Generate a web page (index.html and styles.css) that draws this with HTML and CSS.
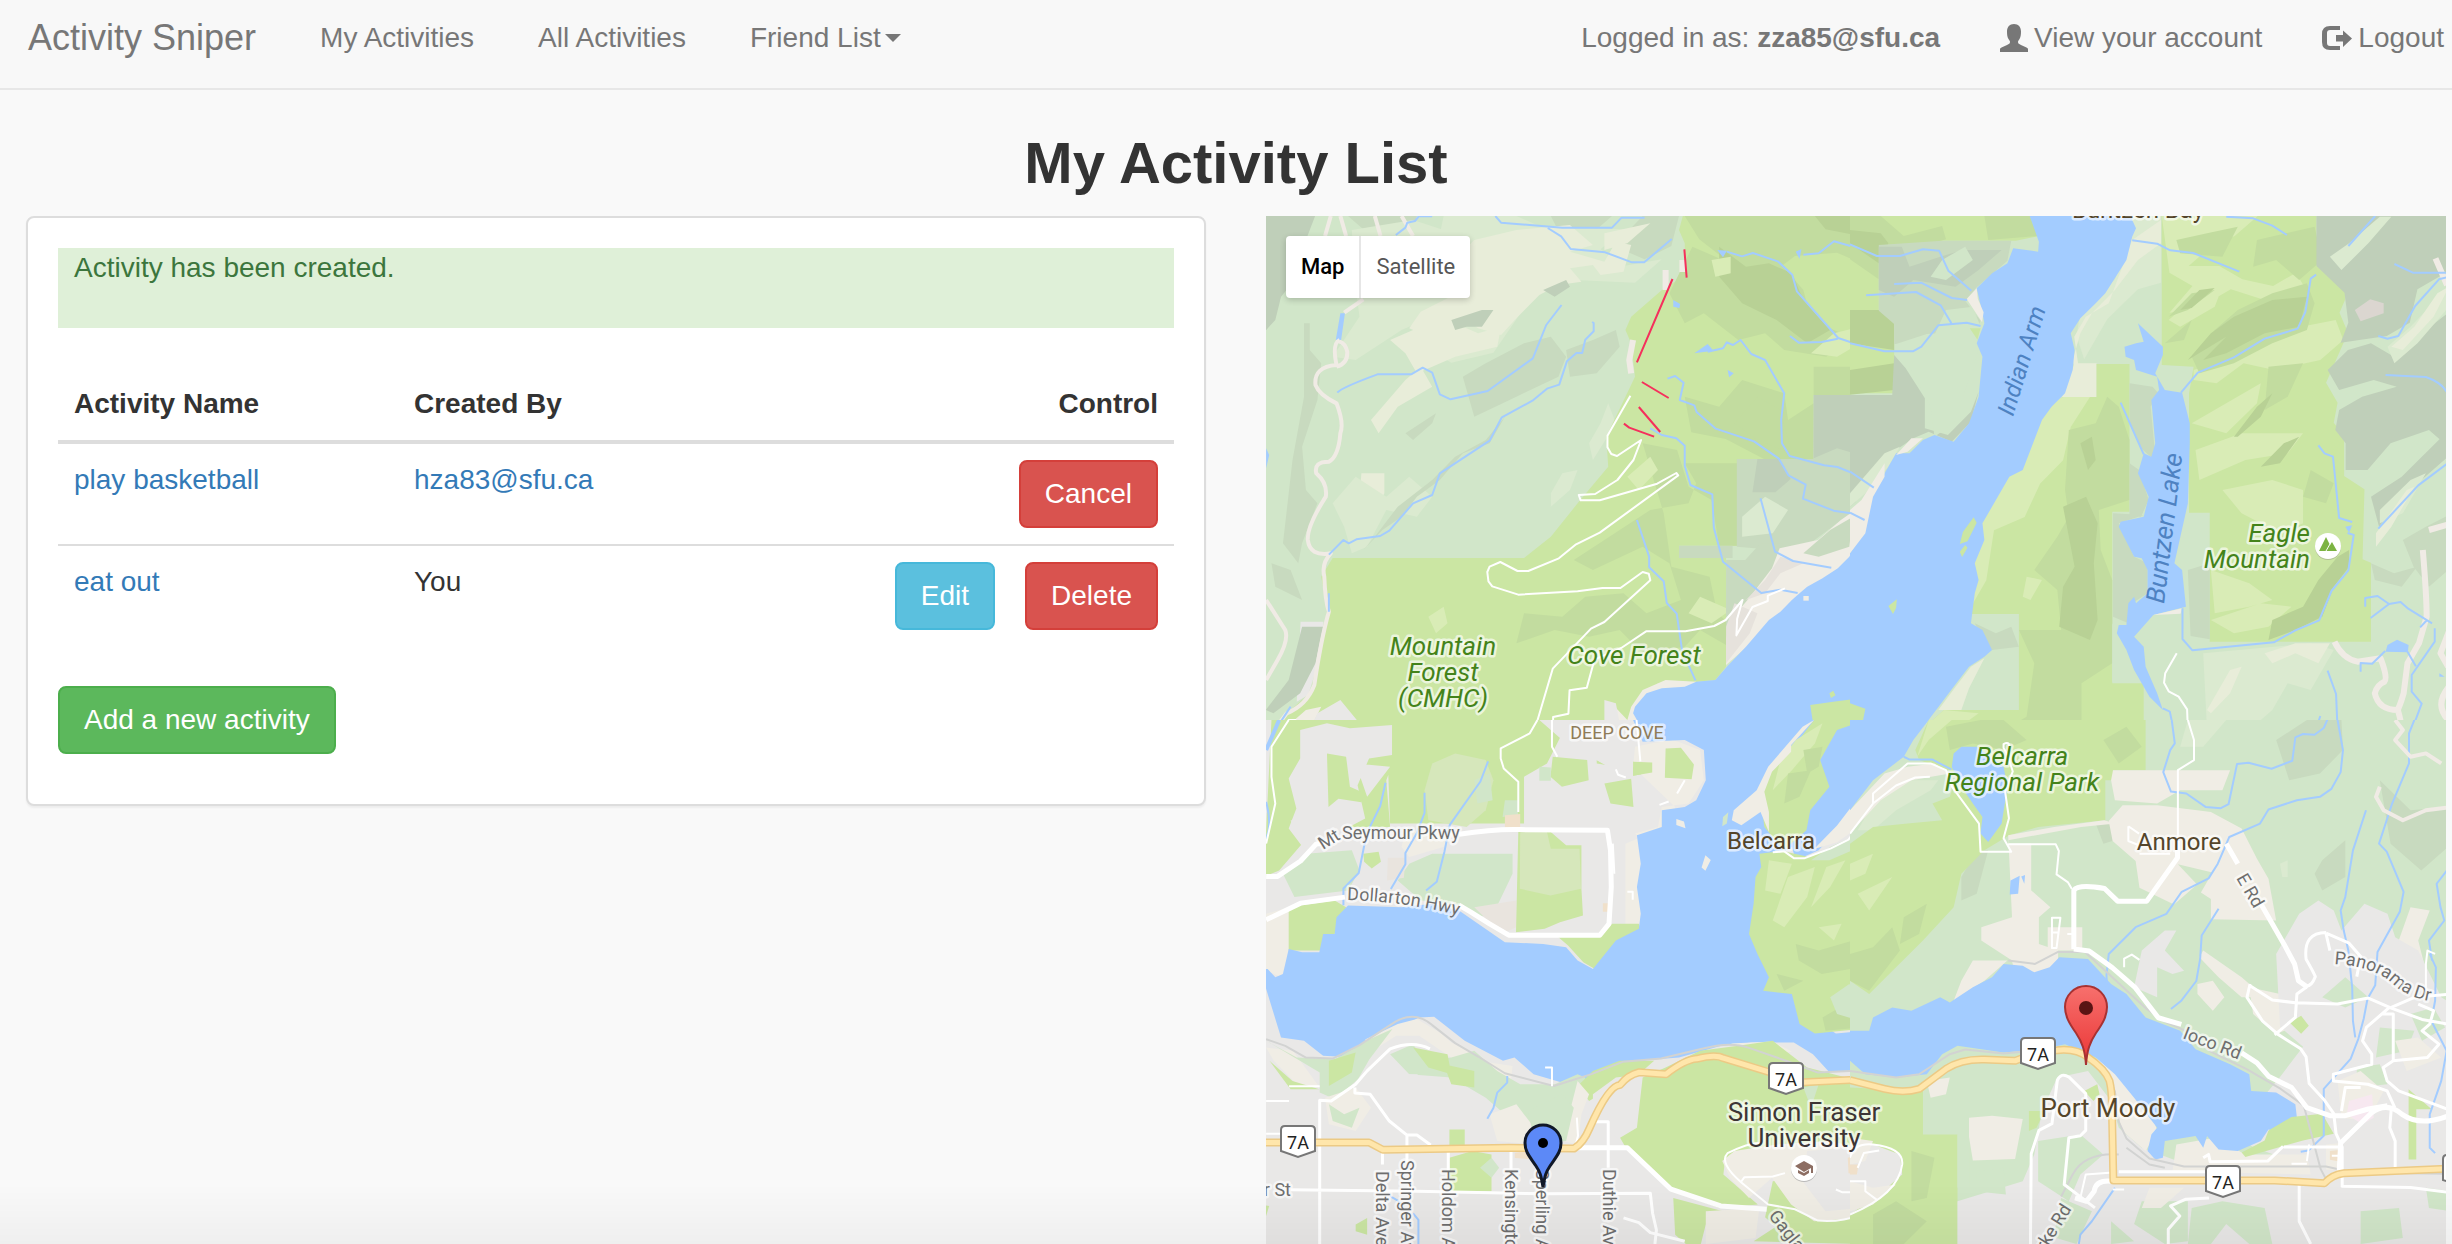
FILE: index.html
```html
<!DOCTYPE html>
<html lang="en">
<head>
<meta charset="utf-8">
<title>Activity Sniper</title>
<meta name="viewport" content="width=device-width, initial-scale=1">
<link rel="stylesheet" href="styles.css">
</head>
<body>
<nav class="navbar">
  <a class="brand" href="#">Activity Sniper</a>
  <a class="nav-link" href="#">My Activities</a>
  <a class="nav-link" href="#">All Activities</a>
  <button class="nav-link nav-toggle" type="button">Friend List<span class="caret"></span></button>
  <div class="nav-right">
    <a class="nav-link" href="#"><span>Logged in as: <b>zza85@sfu.ca</b></span></a>
    <a class="nav-link" href="#"><svg class="icon" viewBox="0 0 28 28" aria-hidden="true"><path d="M14 0c4.500 0 7 3 7 7.500 0 3-.3 5.500-1.500 7.500-1 1.500-1.500 2-1.500 3 0 1.500 1 2 3 3l5.500 2.500c1 .5 1.500 1 1.500 2V28H0v-2.500c0-1 .5-1.500 1.500-2L7 21c2-1 3-1.500 3-3 0-1-.5-1.500-1.500-3C7.300 13 7 10.500 7 7.500 7 3 9.500 0 14 0z"/></svg>View your account</a>
    <a class="nav-link" href="#"><svg class="icon icon-wide" viewBox="0 0 30 28" aria-hidden="true"><path d="M18 2v4H8Q5 6 5 9v10q0 3 3 3h10v4H8q-8 0-8-8V10q0-8 8-8z"/><path d="M14 11h7V6.500L30 14.500 21 23v-5.500h-7z"/></svg>Logout</a>
  </div>
</nav>

<h1>My Activity List</h1>

<main class="columns">
  <section class="panel">
    <p class="alert">Activity has been created.</p>
    <table class="activities">
      <thead>
        <tr><th class="col-name">Activity Name</th><th>Created By</th><th class="control">Control</th></tr>
      </thead>
      <tbody>
        <tr>
          <td><a href="#">play basketball</a></td>
          <td><a href="#">hza83@sfu.ca</a></td>
          <td><div class="actions"><button class="btn danger" type="button">Cancel</button></div></td>
        </tr>
        <tr>
          <td><a href="#">eat out</a></td>
          <td>You</td>
          <td><div class="actions"><button class="btn info" type="button">Edit</button><button class="btn danger" type="button">Delete</button></div></td>
        </tr>
      </tbody>
    </table>
    <button class="btn success" type="button">Add a new activity</button>
  </section>

  <section class="map" aria-label="Map of activities">
    <svg class="map-canvas" viewBox="1266 216 1180 1028">
      <defs>
        <linearGradient id="red-pin" x1="0" y1="0" x2="0" y2="1"><stop offset="0" stop-color="#f7706d"/><stop offset="1" stop-color="#ea3535"/></linearGradient>
        <path id="dollarton" d="M1347 900Q1420 902 1480 922"/>
        <path id="panorama" d="M2334 964Q2373 966 2393 984T2446 1003"/>
        <g id="shield"><path d="M-17 4q0-4 4-4h26q4 0 4 4v21L0 31-17 25z" fill="#fff" stroke="#777" stroke-width="2"/><text class="ref" x="0" y="23">7A</text></g>
      </defs>

      <!-- north-west tile -->
      <svg x="1260" y="210" width="600" height="520" viewBox="0 0 1568 1560" preserveAspectRatio="none">
        <path class="forest" d="M0 0H1568V1560H0z"/>
        <path class="forest-3" d="M0 0H150L120 90 90 210 55 260 40 330 0 380z"/>
        <path class="forest-2" d="M115 340h15v80l30 40-10 110-40 140 10 130 30 40-40 120-10 60-40-60 25-250 30-190zM230 18h180l-20 60-60 10-60-30zM760 18h160l-60 60-60 30zM1000 18h95l-20 90-70 40-80-40z"/>
        <path class="forest-light" d="M240 60l160-30 160 60 30 60-140 170-80 40-120 90-60-10 70-120-10-90zM480 18h190l60 30 220 10-60 60 60 50 100-20-70 70-200-10-80 70-90 150-110 30-90-60z"/>
        <path class="cream" d="M560 90l110-30 140-15 60 60-60 20 90 30 30-60 40 10-20 80-60 10-20-30-60 10 30 40-60 10-50 30-60 70-40 50-60-20-40-30-60 40-40 10-40-20 30-50 70-40 60-80-20-60zM400 360l90-30 80 40 60-20-10 60-110 30-60 30-40 20-30-60-40-40zM380 510l40-40 30 60-90 60-50 80-20-40zM265 790h60v60l-40 90-30-10zM900 70l120-30-60 60-60 20z"/>
        <path class="forest-light" d="M190 880l60-80 80 60 60-60 60 60-40 60-80-20-50 110-40 20-20-80zM760 850l30-60 40-10-20 60-50 50zM860 700l30-60 20-60 20 60-60 110z"/>
        <path class="forest-3" d="M500 330l80-30 30 0-30 50-40 0-30 10zM740 240l60-30 10 20-40 30z"/>
        <path class="forest-2" d="M530 500l60-40 100-60 70-20 40 60-20 60-110 60-110 60zM800 420l70-30 60-30 10 50-60 80-70 10zM300 980l60-90 90-80 60-70 80-50 50-70-40 80-70 30-60 80-60 50-40 60-50 40-50 60zM560 560l60-30-20 50-40 30zM380 670l80-60-10 30-50 50zM30 1060l50 20 30 90-70-40z"/>
        <path class="park" d="M1105 18h463v537h-121v192h-200v260h-152v37h123v326l-28 40-50 5-100 5-60 70-20 70H40l40-60 50-50 30-120 15-130-15-100 30-56h500l70-64 70-100 80-110-5-90 75-180-10-100-15-40 15-40 90-90 50-30V100l-15-40z"/>
        <path class="park-2" d="M1110 18h458v140l-60-30-110 10-70 60-90-30-90-80zM1130 110l120 60 110-10 60 80 20 90 100 50-60 60-110-20-50-50-70 20-90-80-50 30-40-90zM1110 560l90 30 60-80 110 40 10 80 67-50v167h-130l-100-60-90-20zM1000 700l90 20 30 110 60 40 20 137h47v-247H1110l30 60-20 60-100 20-80 60-120 90 50 30 130-70 70 50 30 110-90 40-60-60-100 10-60 60-100-10-20 90 100-40 90 20 80-20 60 70 110-20 40-50 60 40 45 30v-60l-60-60-20-110-100-30-20-160z"/>
        <path class="park-3" d="M1200 110l70 60 60-10 60 30 30 80 70 90-60 40-80-70-90-50-60-80zM1450 18h118v60l-90-20zM1240 200l100 30-70 30z"/>
        <path class="park-2" d="M1447 470h121v85h-121zM1300 560l60 40 30 130-90-40-60-50z"/>
        <path class="park-light" d="M1180 150l50-10 0 50-40 10zM1440 430l60-60 68-20v50l-60 40zM1230 1200l-50 40-60-30 30-50zM440 1220l40-30 10 50-30 30zM960 800l60-60 20 40-50 60z"/>
        <path class="forest-2" d="M1447 555h121v345l-60 40-70 60-90 20-102-10V747h200z"/>
        <path class="forest-3" d="M1447 555h121v180l-60-20-61 30zM1300 747h57l30 60-40 40-60 0z"/>
        <path class="forest-2" d="M1095 1007h140v37h-140zM1218 1050h50l40-50h60l-30 90-60 90-60 70z"/>
        <path class="forest-light" d="M1260 920l60-60 60 40-40 70-80 10z"/>
        <path class="beige" d="M1568 890l-50 40-60 60-100 25-20 60-60 90-45 60-15 60v80l60-60 80-90 70-60 80-60 60-90zM1140 1415l-80-5-60 30-30 50-10 40-45-55v145h90zM60 1560l60-60 40-10-30 70z"/>
        <path class="forest-2" d="M1490 960l60-40-10 90-80 30-40-10z"/>
        <path class="beige-2" d="M1360 1040l-40 70-50 60 50-20 40-60 60-30zM1240 1180l60 30-20 60-62 90v-110z"/>
        <path class="urban" d="M130 1560l20-50 60-40 50 70 60-5 25 25zM900 1470l30 10 10 60-40 20zM106 1235h60l-10 110-30 110-30 20z"/>
        <path class="forest-3" d="M110 1250h55l-20 110-40 90-70 60-20-10 60-90z"/>
        <path class="water" d="M1568 985l-28 55-30 35-40 30-40 25-20 20-20 20-30 35-30 25-60 80-50 60-30 40-50 5-30 15-60 5-40 15-30 40-5 20 25 50h593zM210 310h12l-10 80h-14zM16 715l8 20-8 40zM1195 120l25 2-10 20zM1400 125l15-8-5 30zM1080 270l18 12-2 12-16-4zM1135 430l35-28 15 20zM1222 480l16 10-12 12z"/>
        <path class="park" d="M1568 1465l-70 10-60 10 10 75h120zM1488 1450l10-8 6 14-12 8z"/>
        <path class="beige" d="M1420 1158h14v14h-14z"/>
        <path class="track" d="M185 18l-15 60M210 18l15 60M300 18l15 60M370 18l30 60M270 268l-50 40M208 390q-20 10-8 75-60 5-55 60 10 30 55 55 20 60 10 90-5 70-30 85-40 0-33 35 30 30 25 70-50 90-47 130 5 50 60 40-25 30-17 70 2 70 12 105-20 80-38 220-20 60-72 85l-40 60M200 470q30-10 28-45-5-25-20-30M16 1170l50 90q10 30-20 90l-30 60"/>
        <path class="track thick" d="M975 390l-10 60 5 40M1060 180v60M1104 150v36"/>
        <path class="stream" d="M355 75l25-22 5-15 20-5 10-14h35M615 18l15 20 160 15h130l25-30h60M752 54l35 25 25 38 90 10 70 30h32l72-70M202 548q10-15 105-55h88l30-20 25 15 20 65 28 15 97-25 118-98 35-100 40-60M180 1034l38-44 14 10 20-12 62-10 24-16 62-82 50-25 20-65 130-98 32-70 80-50 38-36 32-12 20-70 25-25h15l8-40 22-25v-25l-4-3M1220 125l40 14 28-10 65 25 38 40 12 50 108 140 57 22M1385 378l23 20 60-2 42-10M1420 134l40-4 40-36 68 22M1170 425l40-10 10-18 16 8 20-15 28 42 36 18 50 100-8 80 2 70 20 38 90 28 35 5 60 28M1065 506l20-8 22 20-10 52 38 16 6 20 50 50 100 38 65 52 25 50 45 28-7 42 80 36 45 8 38 2M1020 655l30 20 38 10 22 22v60l15 58 57 28 4 100 24 102 100 94 50-10 45 10M1308 865l38 160 47 28 100 20M985 930l32 110v32l38 42 8 65 26 32 14 110 35 90M180 1150v55M80 1490l-40 70"/>
        <path class="road thin" d="M968 557l-60 120v35l10 20 15 6 63-48-20 60-42 60-58 42-43 3 5 16h50l150-50 50-32 5 7-205 172-62 35-45 42-80 38h-28l-45-27-28 14-6 16 3 28 10 15 68 25 155-10 65-10h47l58-48 16 5 4 20-120 125-35 20-100 120-45 175-10 30M1372 1135l-45 22v16l-40 18-42 85 2-50 14-56-44 60-30 18-75 16h-103l-65 50-70 35-20 84-45 8-3 70-40 10v40M60 1560l15-30h18l-10 30"/>
        <path class="lift" d="M1109 118l6 85M1078 207l-93 250M998 516l70 48M990 591l56 75M951 641l14 12 65 27"/>
      </svg>

      <!-- north-east tile -->
      <svg x="1850" y="210" width="602" height="520" viewBox="0 0 1568 1560" preserveAspectRatio="none">
        <path class="forest" d="M0 0H1568V1560H0z"/>
        <path class="park" d="M0 18h470l22 60-60 14H240v38H75v170h40v250H0z"/>
        <path class="park-2" d="M0 18h80l60 60 100-30 10 40-60 20-115 20v80l-75-60zM350 18h118l22 60-130 12z"/>
        <path class="park-3" d="M0 60l80 10 20 30-25 60-75-60zM0 300h115v120l-115-20zM0 480l115-20v80l-115 14z"/>
        <path class="forest-2" d="M75 105l165-13h180l-10 60-80 80-30 40 40 60-10 30-130 10-80 30H115v-60l-40-40z"/>
        <path class="forest-3" d="M75 110h60l20 60 80-30 60-20h100l-60 60-60 50-110-20-50 50-40-20zM0 555h110l5-120 30 40 50 90v90l60 20 60-70 20-60-20 90-50 60-60-30-40 20-90 70-40 60-20 60-60 60z"/>
        <path class="forest" d="M240 150l60-40 20 40-70 60-40-10zM250 300l70-10 20 60-10 90-60 200-50 40-10-90-60-130 60-60z"/>
        <path class="forest-light" d="M0 850l90-120 40-20-30 60-60 80-40 40z"/>
        <path class="forest-light" d="M735 18h75v200l-60 20-80 90-60 120-20-70 10-70 90-100 40-130z"/>
        <path class="cream" d="M735 90l75-60v70l-60 50-60 90-60 70-30 60-20 80 20 110h42v-100l-20 100-60 0-20 50 40-60 12-90-10-80 30-60 60-40z"/>
        <path class="cream" d="M585 460h57v101h-90z"/>
        <path class="park" d="M555 561h87v-99h86v443h-45v510h82v145H185l60-60h195v-288H315l10-62 10-40-10-50 25-70-5-50 35-70 35-70 35-20 30-90 20-60 25-40z"/>
        <path class="park-light" d="M555 561h70l-50 90-20 100-60 70-40 100-80 40-20 150-40 80 10-60-10-60 25-80-5-50 35-70 35-70 35-20 30-90 20-60 25-40zM460 1100l40 10-30 60-20-10zM520 1470l60-40-20 90-40 20zM185 1560l60-60 90 10-60 50z"/>
        <path class="park-2" d="M570 660l70-20 30-80 30 30 28 100v180l-80 30 5 120 30 90v250l-80 60v180H250l60-50 90 10 60-40 20-160-40-100h110l-10-120-60-60 60-100 30-60-10-80z"/>
        <path class="park-3" d="M600 700l30-20 10 70-20 30zM555 890l60-30 30 80-10 120 10 170-20 60-80-40 10-120 30-60z"/>
        <path class="forest-2" d="M728 520l60 10 15 20-20 40 10 120-5 35-30-30-30-80zM728 760l25 20 25 90-20 50h-30zM685 910l80 5-65 25 40 100 35 20v90l-40 30-10 60-40-20z"/>
        <path class="forest" d="M683 1240l30 60 50 120h-80z"/>
        <path class="forest-2" d="M325 1240l55 30 40-20 20 60-70 10-20-20z"/>
        <path class="cream" d="M230 1500l45-70 40-60 35-25-40 90-20 65z"/>
        <path class="park" d="M812 18h403v120l80 70-5 60-15 40 22 60-57 150 30 60-10 60 27 40v120l53 40-5 210 22 10v237H937V908h-54V550l12-80-83-5z"/>
        <path class="park-light" d="M812 18h250l-60 60-60 30-60 60 80 0 60 40 80 20 60-40 20 40-80 50-110-40-90 60-70 10 60-80-60-40zM830 330l80-80 60-20-20 60-90 60zM895 480l110-40 80-50 90-40 90-20 20 60-60 60-120 30-80-20-70 60-60-10zM890 640l90-60 90-60-10 60-80 90zM900 720l120-50 160 0-40 60-110 20-120 60zM970 840l130-30 80 30v100l-60 30-100-60zM940 1080l100 40 60 50-60 20-90 20zM940 1230l130-50 80 10-60 60-90 20z"/>
        <path class="park-2" d="M850 90l80-20 80-20-40 90-110-10zM1060 90l150-40 20 100-60 60-60-60-60 20zM830 320l60-70 60-10-70 60zM820 400l70-70-20 60zM890 440l60-80 60-60 90-50 90-30 20 60-20 80-90 40-100 60-90 30zM1090 470l90-10-40 100-60 40zM1200 780l60 40-20 60-60-20z"/>
        <path class="park-3" d="M880 450l60-80 60-50 100-50 90-10-20 90-90 20-100 60-60 20 60-70zM860 300l50-60 40-6-60 60zM1000 680l60-90 40-40-30 70-60 60zM1070 770l60-70 40-20-50 80zM1270 1040l30-20v50l-40 60-30 90-70 40-70 30 10-60 80-40 40-80z"/>
        <path class="forest-2" d="M880 1080l57-20v228l-50-10z"/>
        <path class="forest-3" d="M1215 18h353v160l-90 60-20 100-60 40-120 20 20-60-10-90-73-80zM1297 420l60-20 60 40 60-60 91-80v420l-60-60-100 40-60 80h-57v-80l-27-40 10-60 60-40 90-30-60-20-90 30-30-60zM1357 860l80-60 131-150v80l-130 130-60 90z"/>
        <path class="forest-2" d="M1357 1060l60 30 60-20-40 60-70-20zM1440 990l60-40 68-40v160l-60 60-40-60z"/>
        <path class="forest-light" d="M1300 100l60-60 20-20h30l-60 80-70 80-30-40zM1400 410l60-60 108-130v60l-90 120-60 60zM1380 900l80-90 40-20-60 120-60 30zM920 1330l280-30 60 20-60 120-60-20-40 80-60 60h-110z"/>
        <path class="cream" d="M1410 410l60-60 60-100 30-20-40 90-80 100zM1370 970l80-130 20-10-60 120-40 60zM930 1500l60-120 30-10-30 80-50 60zM1080 1330l80-30 90 0-30 60-60-30-60 30z"/>
        <path class="taupe" d="M1315 300l40-32 35 12v30l-60 24z"/>
        <path class="water" d="M468 18l24 77-2 30-65-10-15 45-40 30-40 45 15 75 5 30-20 60 15 40-10 120-25 80-40 55-50-20-30 15-35 40h-35l-35 70-25 40-20 80-5 50-35 60v530h185l85-130 40-60 40-30 20-20-25-60-30-20 10-90 10-40-10-50 25-70-5-50 35-70 35-70 35-20 30-90 20-60 25-40 35-40 20-70 5-60-10-50 25-45 40-45 25-30 55-100 15-70 10-25-10-25V18z"/>
        <path class="water" d="M750 340l65 70v25l-20 55 25 50 45 8 20 92v60l-5 180-35 180 20 20 10 110-85 25-50 65 25 30 5 60 30 80 15 50-35-40-40-80-20-60-25-50 5-25h20l5-65 15-20 5 20 30-30v-70l-15-35-20-5-40-90 5-15 60-15 13-60-28-70 15-60 20 10 10-40-10-130 20-30-5-40-55-20-5-30-22-10-3-30 30-10 20-5zM1395 1325l5-20 25-16 30 16-2 22zM1290 950l18-4-8 22zM1535 1390l14 10h-14z"/>
        <path class="beige" d="M330 235l-26 32 40 70 4-30-15-40zM190 685l-40 40-30 10 40-50zM90 760l-60 110-30 30v130l40-60 20-110 30-60zM790 1215l75-20-4 16z"/>
        <path class="park" d="M322 922l8 16-24 56-20 8 8-36zM300 1005l6 8-14 28-6-16zM100 1188l22-20-2 26-8 18zM312 355h28l-8 34zM0 1480l40 16-6 34-34 14z"/>
        <path class="track thick" d="M1262 1295q20 50 60 60l60-10q20 60 10 70-20 10-25 35 10 50 60 50 10 40 10 60M1492 1020q10 140 10 200l-20 80-30 60-10 90q-10 40-20 60M1568 1240l-30 90 20 40M1568 1420q-50 60-10 110M1525 145l30 80M1568 940l-60 20"/>
        <path class="stream" d="M0 103l70 35h60l60-20 42 4 24 60 60 60M115 222l70-4 80 46 40 6M42 256l130-10 64 40 28 54M0 400l90 24h74l22-14 44-64 74-8 36 10M0 785l62 48M0 908l38 22M735 91l65 10 34 20 60 8 120 56M980 20l70 5 50 22 38 28M862 548l44-60 94-46 80-56 86-30 20-50 14-100 14-12M705 578l60 155M866 1195v92l26 34 212-24 56-36 62-30 32-88 44-62 14-106-16-6M1220 706l16 24 22 10 16 184 34 12M1298 108l70-90M1376 378l24 8 28-8 44-90 62-80 34-10M1418 162l48 26h86M1395 495l105 6q50 20 60 60M1376 956l104-130 88-76M1342 1190v-26l32-6 30 24 30-6 20 20 62 44M1404 1182l-48 42M1503 1230l-18 22M1523 1255v40l-60 100v50l26 36-26 80M1330 1385v-26l30 2 34-38M1452 1325l22 44M1244 1382l22 70 4 108M1225 1518l-12 42M815 1495l18 10 10 55"/>
        <path class="road thin" d="M851 1330l-30 60-3 28 12 26 26 16 22 38 2 62"/>
      </svg>

      <!-- south-west tile -->
      <svg x="1260" y="720" width="600" height="524" viewBox="0 0 1568 1568" preserveAspectRatio="none">
        <path class="urban" d="M0 0H1568V1568H0z"/>
        <path class="park" d="M30 0h320v120l-20 60 10 140H230l-150-20 30 70-60 80-40 20zM330 0h400l60 60 120 80 90 110-20 40-120-30-80 30-60 20H340z"/>
        <path class="urban" d="M105 30l70-20 60 15 110-10v90l-60 10-30 80 20 100-100 60-60 30-40-60 20-60-20-90 30-60zM690 170l60-40 40-90h90v90l110 20 60 60v80l-60 40H690zM250 130l90 10-60 90zM880 0h100v70l60 60-60 50-100-60z"/>
        <path class="park" d="M175 100l50 10 10 90 40 20-10 26-60-10-26 24zM765 110l90 10 4 60-70 20-30-30zM975 125l50 2v30l-50 10zM1060 85l40-2 34 50-6 44-70-4zM900 190l70-14 6 84-60-10z"/>
        <path class="park-soft" d="M450 130l60-30 80 20 20 60-20 90-50 50-100-20-10-90z"/>
        <path class="forest" d="M60 460l60-60 120-10 20 60-30 60-140 20zM390 430l60-30h210v60l-50 120-40 10-60-40-90-10-60-60zM560 180l40-20 8 80-40 10zM640 240h36l-2 44-40 6zM730 140l30 2v40h-30z"/>
        <path class="beige" d="M16 580l60-20v130l-20 80-40-20zM380 330l130 10-30 40-90 30-20-30zM980 340l60-20 10-60 70-10 40-70-10-90-70-30-60 10-40 10-5 60 110 120-6 50-124 60v270h85l-12-100 10-70-14-90z"/>
        <path class="park" d="M1060 85l40-2 34 50-6 44-70-4zM975 125l50 2v30l-50 10z"/>
        <path class="taupe-2" d="M560 560l110-20v80l-40 20zM334 412h46l-4 60-44 8z"/>
        <path class="park" d="M675 335h85l40 40h40v130l4 80-60 20-40 20-75 10zM75 560l120-20 30 20-30 80-30 50H75zM780 650l110-10 30-30h70l5 20-60 30-60 85-30-20-40-50z"/>
        <path class="park-soft" d="M680 335h70l10 50h75l4 120-80 20-80-20z"/>
        <path class="orange" d="M640 285l40-4v40h-40zM896 548h14v26h-14z"/>
        <path class="park" d="M270 400l40-6 6 30-24 20-20-20z"/>
        <path class="water" d="M0 745h20l20 25 20-10 15-75 35 10h45l10-55h30l5-50 30-35 140 5 80-10 70 20 50 40 70 55 100 5 60 10 30 40 40 25 60-85 60-35 5-45-10-80 10-70-10-85 65-25v-50l60-10 30-20 25-60-5-90-50-30-110 5-25-65h593v240l-60 90-48 60-60 30-10-40-30 20 5 40-15 30-5 80-12 90 22 60 30 70-15 40 75 10 20 90 40 28 118-13v125h-138l-40-50-50-35h-110l-80 10-110 35-110 10-70 40-95 35-105-35-50-50-30 10-100-60-80-72-40 2-70 50-100 70-80-5-50-45-60-10z"/>
        <path class="park" d="M1448 0h120v6l-60 24-44 90 24 80-50 70-10 60-60 60-50-70-10-90 20-80 60-60z"/>
        <path class="park-light" d="M1400 60l70-50-20 60-60 80-50 60 20-90z"/>
        <path class="park-2" d="M1420 90l50-10-10 60-30 20zM1380 160l60-10-30 80-40 20z"/>
        <path class="beige" d="M1448 0l-30 20-90 120-30 70-60 60-5 30 25 15 50-40 22 60 0-60-12-60 20-60 50-60 0-20zM1568 226l-60 90-60 70 60-20 62-50zM1088 296l20 8 4 20-24-10zM1164 405l14 14-14 32-10-10z"/>
        <path class="forest" d="M1210 290l14-14-4 34-12 8z"/>
        <path class="park" d="M1305 400l60-8 70 18 133-60v575l-118 13-40-28-20-90-75-10 15-40-30-70-22-60 12-90 5-80 15-30z"/>
        <path class="park-light" d="M1330 420l60 10-30 90-40-10zM1380 470l70-30-20 90-60 90-30-20zM1480 440l50-20-40 80-50 60zM1460 620l60-10-20 50z"/>
        <path class="park-2" d="M1400 670l60 20 90-30 18 80-100 20-60-40zM1350 760l70 20-50 30zM1470 890l60-40 38 40v30l-90 10z"/>
        <path class="forest" d="M1490 830l50-40 28 40v70l-60-20zM1440 420l50-40 78-40v40l-80 40z"/>
        <path class="beige" d="M1230 968l110-6 50 30-40 10zM360 910l50-15 60 40 30 30 100 60 60 10-4 40-60-10-90-50-90-70-60 0-110 80 30-70zM16 980l70 10 70 110-60-10-60-70z"/>
        <path class="forest" d="M16 960l80 50 100 5 90-60 60-30-60 90-30 60-60 60-40-20v-60zM340 1000l60-30 30 50 70-10 60-20 60 60 60 40 90 0 60-30 20 10v60l-30 100-80 30-80-60-70-70-90-60-110-10z"/>
        <path class="park" d="M180 1020l70-25-10 60-60 40zM400 980l90 20 10 60-60-20zM480 1030l80 20v50l-60-10zM25 1020l60 60 70 25H80zM830 1095l40-45 70-30 90 0-40 40-70 40-60 40z"/>
        <path class="urban" d="M280 1120l70-60 60 0 100 60 70 60v110H280zM870 1120l60-50 70-10v180l-60 20-70-80z"/>
        <path class="beige" d="M600 1180l70-30 40 60 0 60-90-10zM830 1080l30 40-20 60-10 90-40-10zM170 1130l80-30 40 60-40 70-70-20z"/>
        <path class="forest" d="M700 1170l90-50 30 40-20 100-80 10zM180 1150l40 30 40-20-20 60-50-20z"/>
        <path class="park" d="M1000 1070l60-30 90-50 100-15 90-15 90 80 138 40v210l-318 0-35 30-4 40 90 90-100 10-120-50-120-120-20-40 44-30z"/>
        <path class="park" d="M1080 1430l130 40-45 40-20 90-60-60zM495 1225h40v50h-40zM495 1310l60-20 50 10v110h-110zM1340 1380l60-10 30 60 30 100-60 38-80-80zM1290 1560l80-60 198-10v78zM250 1510l30-20v50l-30-10zM0 1450l24 4-16 60-8 20z"/>
        <path class="forest" d="M575 1340l30-30 20 30-20 30zM1220 1330l60-34 90 50-80 40-50-20zM1420 1100l40-10-20 70z"/>
        <path class="beige" d="M1165 1470l140-10-10 90-130 18zM1240 1290l110-20 140-10 78 20v210l-120 10-60-50-50-80-60 60-50-60-20-50z"/>
        <path class="urban" d="M1430 1290l110-10 28 60v120l-90 10-60-90z"/>
        <path class="orange" d="M666 1295l60-10v30l-60-4zM1536 1310l32-10v60l-30-4z"/>
        <path class="rail" d="M16 955l50 20 54 35 70 3 70-40 80-60q60-50 110 0l60 54 60 40 70 50 128 38 100-36 80-36 100-10 110-30q70-22 120-2l100 40 80 34 110-6"/>
        <path class="stream" d="M328 188l-14 70-26 60-16 60-14 80-40 46v50M430 218v60l-20 60-30 60v34l-38 74M596 124l-20 60-80 130-14 80-20 90-28 26M16 245q16 70 0 110M646 1065v20l-26 30-10 46-16 32M340 1425l30 20M400 1476l14 20v72"/>
        <path class="water-line" d="M50 0l-34 90"/>
        <path class="road thin" d="M75 0l-45 80v90l10 80-24 120M725 0l-20 40-76 45v30l8 30 38 40v90M763 0v80l14 30M984 0l10 124M930 148l6 16 20 8M1110 180l-20 40M1068 244l-24 10M922 370l4 90M960 514h14v24M1340 396l30-3 26 21h26l70-30 46-26 32-50M1568 1480q-50 24-110 18l-60-34-70-14-70-66q-60-60-36-88 60-34 90-30M1256 1384l10-16 74-2 32-10M1505 1405l16 8h47M16 1140h60M16 1238h40M76 1096h80M828 1190l3 54-6 26M745 1040h18v56"/>
        <path class="road" d="M156 1568v-430l30 2 64-50 30-40 60-66q60-26 104 0M248 1100v16l40 4 50 80 46 42h26l36 30M320 1290v40M384 1245v80M492 1290v60M656 1285v60M740 1380v30M80 1406l330 4 340 8 270-2 6 60 10 50-4 42M910 1340v-138h-34M950 1490l40 14 30 30 90 26"/>
        <path class="road major" d="M16 468h30l60-46 40-50 60-14M520 342q90-16 160-14l228 2 8 60 2 110-6 110-24 34H650l-50-34-50-36-30-20M16 598l90-50 116-18M820 1280h140l114 124 130 50 120 10"/>
        <path class="yellow-edge" d="M0 1264h285l36 22 330-6 170 2q24-16 40-60 50-130 80-130 20-30 50-38l70 6q50-44 80-46 50-14 70-2l120 42 90 30 148-8"/>
        <path class="yellow" d="M0 1264h285l36 22 330-6 170 2q24-16 40-60 50-130 80-130 20-30 50-38l70 6q50-44 80-46 50-14 70-2l120 42 90 30 148-8"/>
      </svg>

      <!-- south-east tile -->
      <svg x="1850" y="720" width="602" height="524" viewBox="0 0 1568 1568" preserveAspectRatio="none">
        <path class="forest" d="M0 0H1568V1568H0z"/>
        <path class="forest-2" d="M1110 60l80-60 90 0 4 90-60 70-80 20zM1380 180l80 90 108-10v110l-80 80-80-80zM1230 420l60-60v110l-60 40-20-50zM640 310l50-10v60l-30 10zM290 470l40-80 30 0-30 130-40 20z"/>
        <path class="forest-light" d="M880 0h100l-60 80-60 0zM20 330l60-120 60-30 90 0-20 30-90 60-60 60zM1120 430l20-10v50l-14 0z"/>
        <path class="park" d="M205 0h565v150h-85v30h-20v120l-175 20-75 25-65 45-60 70-20 100-80 100-140 160-50-40V370l60-50 90-10 90-10-25-50 45-20 20-70-100-40-10-30z"/>
        <path class="park-2" d="M250 20l90-20h60l60 60-60 30-80-20-60 20zM660 60l60-40 40 60-60 50zM0 700l60-20 50-60 20 70-80 120-50-30zM140 590l60-40-20 90-50 30z"/>
        <path class="park-light" d="M205 0h60l-60 60-30 50zM0 430l60-30-20 60-40 20zM20 520l90-50-60 100z"/>
        <path class="beige" d="M0 270l90-110 60-20 70-10 40 30-100 20-80 60-80 100zM685 150h305l-20 60-110 0-60 40-110-10-10-60zM710 255l90 0 140 20 80 50 40 90 30 60 20 125-170-4 0-60-26-20 30-60-90-24 50 60-60 60-90-50-10-80-60-60-10-60zM412 345l120-25 130-20 30 10-90 10-190 40v10h60l0 140 50 50-30 30 0 80 50 20v90l-110 0-10-60-80-60v-40l80-30zM515 620l90 0v70h-90zM320 720l90 0-60 60-80 60 20-60zM920 690l100 80 60 60-60 0-60-60-50-60z"/>
        <path class="beige" d="M1460 560l50 10-30 90 20 90-20 30-60-90zM1040 800l120 30-10 90-40 20-60-60zM905 790l40-10 30 50-30 40-40-50z"/>
        <path class="urban" d="M760 690l60-60 30 0-30 60 50 60-30 10-40-20v90l-60-30zM1110 700l60-120 50-40 40 30 20 60 60-80 60 30 20 70 60 40 60 140 88 60v738H1290l-60-160-60-140-120-50-160-120 90 60 60-40 80-110 60-90-60-60z"/>
        <path class="forest" d="M1290 770l60 60-60 30-60-30zM1460 880l60-20 30 60-60 40zM1380 920l90 10-20 60-80 20zM1320 1040l60-10 20 60-80 10z"/>
        <path class="beige" d="M1270 1080l60-30 60 60-40 90-70-10zM1420 960l60-10 60 60-90 40z"/>
        <path class="pink" d="M1300 1140l60-20 4 70-30 20-40-30z"/>
        <path class="park" d="M1145 905l30-20 20 30-20 24zM1455 1105l60 60h-40v150h-20z"/>
        <path class="park" d="M0 1100l190 10v130h90v328H0z"/>
        <path class="park-2" d="M160 1290l60 20-20 120-40 10zM60 1480l60-40 80 60-60 68H60z"/>
        <path class="urban" d="M0 1270l60 0 70 30 6 60-60 60-76 60z"/>
        <path class="beige" d="M0 1380l60 20 60-10-60 60-60 20zM0 1250l60 10-20 60-40 10z"/>
        <path class="urban" d="M500 1170l40-100 80-20 60 90 20 80 60 60 140 60 340 0 328 10v260H280v-170l170-60 30-80z"/>
        <path class="forest" d="M280 1240h30v160h-30zM490 1260l110-20 60 60-60 60-30 80-80-60zM330 1350l70-10 6 80-80-10zM760 1440l120 0 0 120-60 8-80-60zM890 1460l80-20 110 20 20 108h-60l-60-60-40 60-60 0zM1330 1470l100-10 10 90-110 18zM1500 1400l68 10v60l-60-10zM550 1430l80 40-40 98-60-20zM680 1500l60 60-60 8z"/>
        <path class="beige" d="M310 1190l60-6 80 10-20 120-110 4-10-70zM640 1000l60 60 90 130 10 40-30 60-60-60-30-110zM200 1080l60-10-10 50-40 10zM850 1270l100-20 80 50 160 0 10 60-360-10zM1240 1270l40-4v80h-40zM780 1400l90 0-60 60-50 0z"/>
        <path class="orange" d="M1250 1290l28-4v36l-28-6zM0 1330l22 0-4 30H0z"/>
        <path class="park" d="M466 1170l40 0-20 50-20 10zM610 1110l34-20 6 30-16 20z"/>
        <path class="water" d="M0 0h205l-40 60-25 50-80 70-60 90zM290 80h40l70 60 10 60-15 110-35 55-20-25 5-50-25-40-30-50-25-60 5-40zM418 480l24-14-4 54-22 2zM446 468l10-4-2 26zM0 930h50l10-40 50-30 50 10 75-40 25 15 60-45 50-30 30-40 50 5 30 20 40-15 25-30 75 5 60 75 40 30 50 70 90 40 40 55 90 45 50 30 5 50 65 5 50 35 5 50-20 40-55-15-20 35-60 30-50-5-30-40-10 35-20-35-80 15-5 50-20 5-20-25 10-50 15-20-60-90-50-70-50-50-80-40-60 15-100 10-120-20-40 25-40 60-80 10-80-10-40-40z"/>
        <path class="park" d="M1020 1294l60-36 10-30 60-40 80-10 30 60-80 20-60 20-90 30z"/>
        <path class="stream" d="M140 110l14 8h60l50 30M838 0l8 70-12 20-18 66 20 58 40 6 50 40 40 4 20-12 22-120 30-4 60 18 54-24 8-70 20-10 30 2 24-20 12-32M1270 0l14 90-6 66-24 50-30 24-60 10-74 28-22 42-80 40-30 80-24 44-70 40-40 66-80 40-70 80-6 64 2 50M1470 0l-14 40v90l-44 120-34 120 20 24 44 120-10 60-58 120-6 100-20 40-10 60-14 60-20 60-70 90v140l-40 44-20 4M1344 270l-34 120-20 140-12 40 8 60 12 60 10 110 2 100 6 50M960 565l-44 80-4 70-10 66-40 60-26 24M1568 430l-40 60 10 70 10 40-40 60 8 60M1510 700l16 40-2 100-10 60 40 90-14 90-30 100v100l14 16M690 1400l-60 100-30 40-4 28"/>
        <path class="rail" d="M412 720l70 10 60-36h70l160 170 50 40 60 30 60 60 90 50 90 60 60 50 14 60 30 130 14 30M0 1050l120 20 60-10 80-60 40-14 100 12 100-10 60-10 60 24 50 50 20 60 10 90 20 50 60 60 90 24h370l70 18 258 4M700 1300q-90-6-120 60l-30 66M720 1280l60 50 40 10"/>
        <path class="track" d="M1420 0l20 30-20 30 40 50 40-10 40 30M1380 200l-10 30 20 40 50 30 60-30 68-10"/>
        <path class="road thin" d="M0 340l60-90v-30l90-90 60 0 40 20 16 50 70 110 4 84h80l-20-40 14-60-10-80 20-60-14-50-10-20v-12q10-6 14 0v20M60 250l60-54 50-24 38-2M412 372h124l8 20-6 70 30 24 10 20M880 0l16 60v60l-42 30v200M725 318v44l26 12M725 318l28 22M754 400h80M526 592h22l-10 90h-12zM526 636h18M566 640h18v40M714 740v-26l20-12 20 16M1500 820v-90l4-40 20 10M0 1310q10-46 60-40 80 10 76 60-10 90-136 150M20 1340l16-44 40-8M0 1380l40 0v30l30 26M600 1430l14-70 70-6M684 1405h30M1190 1320l6-50M1150 1328h40M1255 1304h22"/>
        <path class="road" d="M1240 636q-60 0-52 80 20 40 24 52-10 30-24 28M1240 640l10 50M1240 638l60 30 30 40-10 60M1042 790l-8 40 40 70 40 40 60 44 14 24 8 80 40 50 24 40 6 60 16 40v120M1040 794l60 44 60 8 110 4 80-18 60 30 80 34 78 16M1200 790l-36 30-4 70-54 52M1405 860l-60 60-10 40 24 40 0 30-100 30v20l90 10 50 20 20 50M1385 880h30v140l-26 20 10 40 30 30 140 60M1410 860l60-30 98-10M1480 850l40 20-10 40-20 20 44 40-30 40-90 10M1280 1170l10-70 40 0M1130 1278h150M700 1352h230M1170 1380v120l30 68M1280 1395l180 4 108 16M935 1430l-60 4-40 20 24 30-30 40v44M1420 1340v-80l-14-40 4-60M920 1310l14-10 4 22 150-2 40-44M470 1568l2-270 20-70 34-20 14-130q10-24 30-10l44 50v110l-14 16-30 6-12 140 80 70"/>
        <path class="road major" d="M583 685V510q10-20 80-6l34 38h76l80-130v-50M583 685l40 6 60 50 60 60 60 90 60 20M980 370l30 60M1070 550l60 120 28 60 10 50 24 20M1020 996l40 30 30 40 60 34 40 60 60 24 40 0 60-20 50-10M1568 1180q-80 40-130 0-40-40-80-4l-80 90-4 90M680 1380q-40-4-44 30l-20 30-30-10"/>
        <path class="yellow-edge" d="M0 1078l90 26q50 14 90 0l70-60q40-30 100-28l80 4q60-30 110-32 50-6 80 22 44 34 56 70 6 30 6 70l4 228 420 0 130 8q20-26 50-30l284-14"/>
        <path class="yellow" d="M0 1078l90 26q50 14 90 0l70-60q40-30 100-28l80 4q60-30 110-32 50-6 80 22 44 34 56 70 6 30 6 70l4 228 420 0 130 8q20-26 50-30l284-14"/>
      </svg>

      <g class="label nature">
        <text x="1443" y="655">Mountain</text><text x="1443" y="681">Forest</text><text x="1443" y="707">(CMHC)</text>
        <text x="1634" y="664">Cove Forest</text>
        <text class="end" x="2310" y="542">Eagle</text><text class="end" x="2310" y="568">Mountain</text>
        <text x="2022" y="765">Belcarra</text><text x="2022" y="791">Regional Park</text>
      </g>
      <g class="label water-name">
        <text transform="translate(2013 417) rotate(-73)">Indian Arm</text>
        <text class="wide" transform="translate(2164 604) rotate(-83)">Buntzen Lake</text>
      </g>
      <g class="label town">
        <text x="2138" y="218">Buntzen Bay</text>
        <text x="1771" y="849">Belcarra</text>
        <text x="2179" y="850">Anmore</text>
        <text class="large" x="2108" y="1117">Port Moody</text>
        <text class="district" x="1617" y="739">DEEP COVE</text>
        <text class="large campus" x="1804" y="1121">Simon Fraser</text><text class="large campus" x="1804" y="1147">University</text>
      </g>
      <g class="label street">
        <text transform="translate(1323 850) rotate(-32)">Mt</text>
        <text x="1342" y="839">Seymour Pkwy</text>
        <text><textPath href="#dollarton">Dollarton Hwy</textPath></text>
        <text><textPath href="#panorama">Panorama Dr</textPath></text>
        <text transform="translate(2182 1038) rotate(21)">Ioco Rd</text>
        <text transform="translate(2236 878) rotate(60)">E Rd</text>
        <text class="end" transform="translate(2072 1209) rotate(-58)">Clarke Rd</text>
        <text class="end" x="1291" y="1196">r St</text>
        <text transform="translate(1376 1171) rotate(90)">Delta Ave</text>
        <text transform="translate(1401 1160) rotate(90)">Springer Ave</text>
        <text transform="translate(1442 1169) rotate(90)">Holdom Ave</text>
        <text transform="translate(1505 1169) rotate(90)">Kensington Ave</text>
        <text transform="translate(1536 1169) rotate(90)">Sperling Ave</text>
        <text transform="translate(1603 1169) rotate(90)">Duthie Ave</text>
        <text transform="translate(1768 1216) rotate(52)">Gaglardi Way</text>
      </g>

      <use href="#shield" x="1298" y="1126"/>
      <use href="#shield" x="1786" y="1063"/>
      <use href="#shield" x="2038" y="1038"/>
      <use href="#shield" x="2223" y="1166"/>
      <use href="#shield" x="2460" y="1155"/>

      <g><circle cx="2328" cy="547" r="13" fill="#9a9a8a" opacity=".5"/><circle cx="2328" cy="546" r="13" fill="#fff"/><path d="M2319 551l7-14 4 8 2-3 5 9z" fill="#7cb342"/><path d="M2326 551l4-7" stroke="#fff" stroke-width="1"/></g>
      <g><circle cx="1804" cy="1169" r="13" fill="#999" opacity=".6"/><circle cx="1804" cy="1168" r="13" fill="#fff"/><path d="M1795 1166l9-5 9 5v7h-2v-5l-7 4zM1798 1170l6 3 5-3v3l-5 3-6-3z" fill="#8d6e63"/></g>

      <path d="M1543 1187c-2-12-3-15-7-21-6-9-11-14-11-23a18 18 0 0 1 36 0c0 9-5 14-11 23-4 6-5 9-7 21z" fill="#5c89f7" stroke="#101828" stroke-width="3"/>
      <circle cx="1543" cy="1143" r="5"/>
      <path d="M2086 1065c-1-15-4-23-10-32-7-10-11-17-11-26a21 21 0 0 1 42 0c0 9-4 16-11 26-6 9-9 17-10 32z" fill="url(#red-pin)" stroke="#a83232" stroke-width="2"/>
      <circle cx="2086" cy="1008" r="7" fill="#591414"/>
    </svg>
    <div class="map-types">
      <button class="map-type active" type="button">Map</button>
      <button class="map-type" type="button">Satellite</button>
    </div>
  </section>
</main>
</body>
</html>
```
FILE: styles.css
```css
* { box-sizing: border-box; }

body {
  margin: 0;
  min-height: 100vh;
  background: #f9f9f9;
  color: #333;
  font: 28px/40px "Liberation Sans", Arial, sans-serif;
}

/* soft shade along the window's lower edge */
body::after {
  content: "";
  position: fixed;
  inset: auto 0 0;
  height: 60px;
  background: linear-gradient(transparent, rgba(0, 0, 0, 0.04));
  pointer-events: none;
}

a { color: #337ab7; text-decoration: none; }
button { font: inherit; cursor: pointer; }

/* navigation */
.navbar {
  display: flex;
  gap: 64px;
  padding: 18px 8px 30px 28px;
  background: #f8f8f8;
  border-bottom: 2px solid #e7e7e7;
  white-space: nowrap;
}
.brand { color: #777; font-size: 36px; }
.nav-link {
  display: flex;
  align-items: center;
  gap: 6px;
  padding: 0;
  border: 0;
  background: none;
  color: #777;
}
.nav-toggle { gap: 4px; }
.nav-right { display: flex; gap: 60px; margin-left: auto; }
.caret {
  border: 8px solid transparent;
  border-top-color: currentColor;
  border-bottom: 0;
}
.icon { width: 28px; height: 28px; fill: currentColor; }
.icon-wide { width: 30px; }

h1 {
  margin: 40px 0 20px;
  padding-left: 20px;
  font-size: 58px;
  line-height: 66px;
  text-align: center;
}

/* page body */
.columns {
  display: grid;
  grid-template-columns: 1fr 1fr;
  align-items: start;
  gap: 60px;
  padding: 0 6px 0 26px;
}
.panel {
  padding: 30px 30px 50px;
  border: 2px solid #ddd;
  border-radius: 8px;
  background: #fff;
  box-shadow: 0 2px 2px rgba(0, 0, 0, 0.05);
}
.alert {
  margin: 0 0 40px;
  padding: 0 16px 40px;
  background: #dff0d8;
  color: #3c763d;
}

.activities { width: 100%; margin-bottom: 40px; border-collapse: separate; border-spacing: 0; }
.activities th, .activities td { padding: 16px; text-align: left; vertical-align: top; }
.activities thead th { border-bottom: 4px solid #ddd; }
.activities .col-name { width: 340px; }
.activities .control { text-align: right; }
.activities tbody tr + tr td { border-top: 2px solid #ddd; }
.actions { display: flex; justify-content: flex-end; gap: 30px; }

.btn {
  padding: 12px 24px;
  border: 2px solid;
  border-radius: 8px;
  color: #fff;
  line-height: 40px;
}
.success { background: #5cb85c; border-color: #4cae4c; }
.danger { background: #d9534f; border-color: #d43f3a; }
.info { background: #5bc0de; border-color: #46b8da; }

/* map */
.map { position: relative; font-family: Roboto, sans-serif; }
.map-canvas { display: block; width: 100%; height: auto; }
.map-types {
  position: absolute;
  top: 20px;
  left: 20px;
  display: flex;
  border-radius: 4px;
  background: #fff;
  box-shadow: 0 2px 6px rgba(0, 0, 0, 0.2);
}
.map-type {
  padding: 11px 15px;
  border: 0;
  background: none;
  color: #565656;
  font-size: 22px;
}
.map-type.active { color: #000; font-weight: 500; border-right: 2px solid #e6e6e6; }

.forest { fill: #d1e6c9; }
.forest-2 { fill: #c8dabf; }
.forest-3 { fill: #bfcfb9; }
.forest-light { fill: #dbead0; }
.cream { fill: #e8edd9; }
.park { fill: #cbe6a3; }
.park-2 { fill: #c2dc9f; }
.park-3 { fill: #b8d195; }
.park-light { fill: #d9ecb6; }
.park-soft { fill: #d6e7bb; }
.water { fill: #a3ccff; }
.urban { fill: #e9e8e7; }
.beige { fill: #f0ede5; }
.beige-2 { fill: #e6e2dc; }
.taupe { fill: #dbd6d0; }
.taupe-2 { fill: #e9e4de; }
.orange { fill: #f0e0ca; }
.pink { fill: #f7e8f0; }

.stream, .water-line, .road, .track, .rail, .lift, .yellow, .yellow-edge {
  fill: none;
  stroke-linejoin: round;
  vector-effect: non-scaling-stroke;
}
.stream { stroke: #a3ccff; stroke-width: 2px; }
.water-line { stroke: #a3ccff; stroke-width: 4px; }
.lift { stroke: #f5305c; stroke-width: 2px; }
.track { stroke: #f0ebe5; stroke-width: 4px; }
.track.thick { stroke-width: 6px; }
.rail { stroke: #d2d3d2; stroke-width: 2px; }
.road { stroke: #fff; stroke-width: 3px; }
.road.thin { stroke-width: 2px; }
.road.major { stroke-width: 5px; }
.yellow-edge { stroke: #ecca85; stroke-width: 8px; }
.yellow { stroke: #ffe6ab; stroke-width: 5px; }

.label text {
  paint-order: stroke;
  stroke: rgba(255, 255, 255, 0.65);
  stroke-width: 5px;
  stroke-linejoin: round;
}
.nature { fill: #44831a; font-size: 26px; font-style: italic; text-anchor: middle; }
.town { fill: #54452a; font-size: 24px; text-anchor: middle; }
.town .large { font-size: 26px; }
.town .campus { fill: #3d3535; }
.town .district { fill: #8f7c58; font-size: 18px; }
.street { fill: #6e6e6e; font-size: 18px; }
.water-name { fill: #4e82c2; font-size: 24px; font-style: italic; }
.water-name .wide { font-size: 26px; }
.label.water-name text { stroke: none; }
.label .end { text-anchor: end; }
.ref { fill: #222; font-size: 18px; text-anchor: middle; }
```
